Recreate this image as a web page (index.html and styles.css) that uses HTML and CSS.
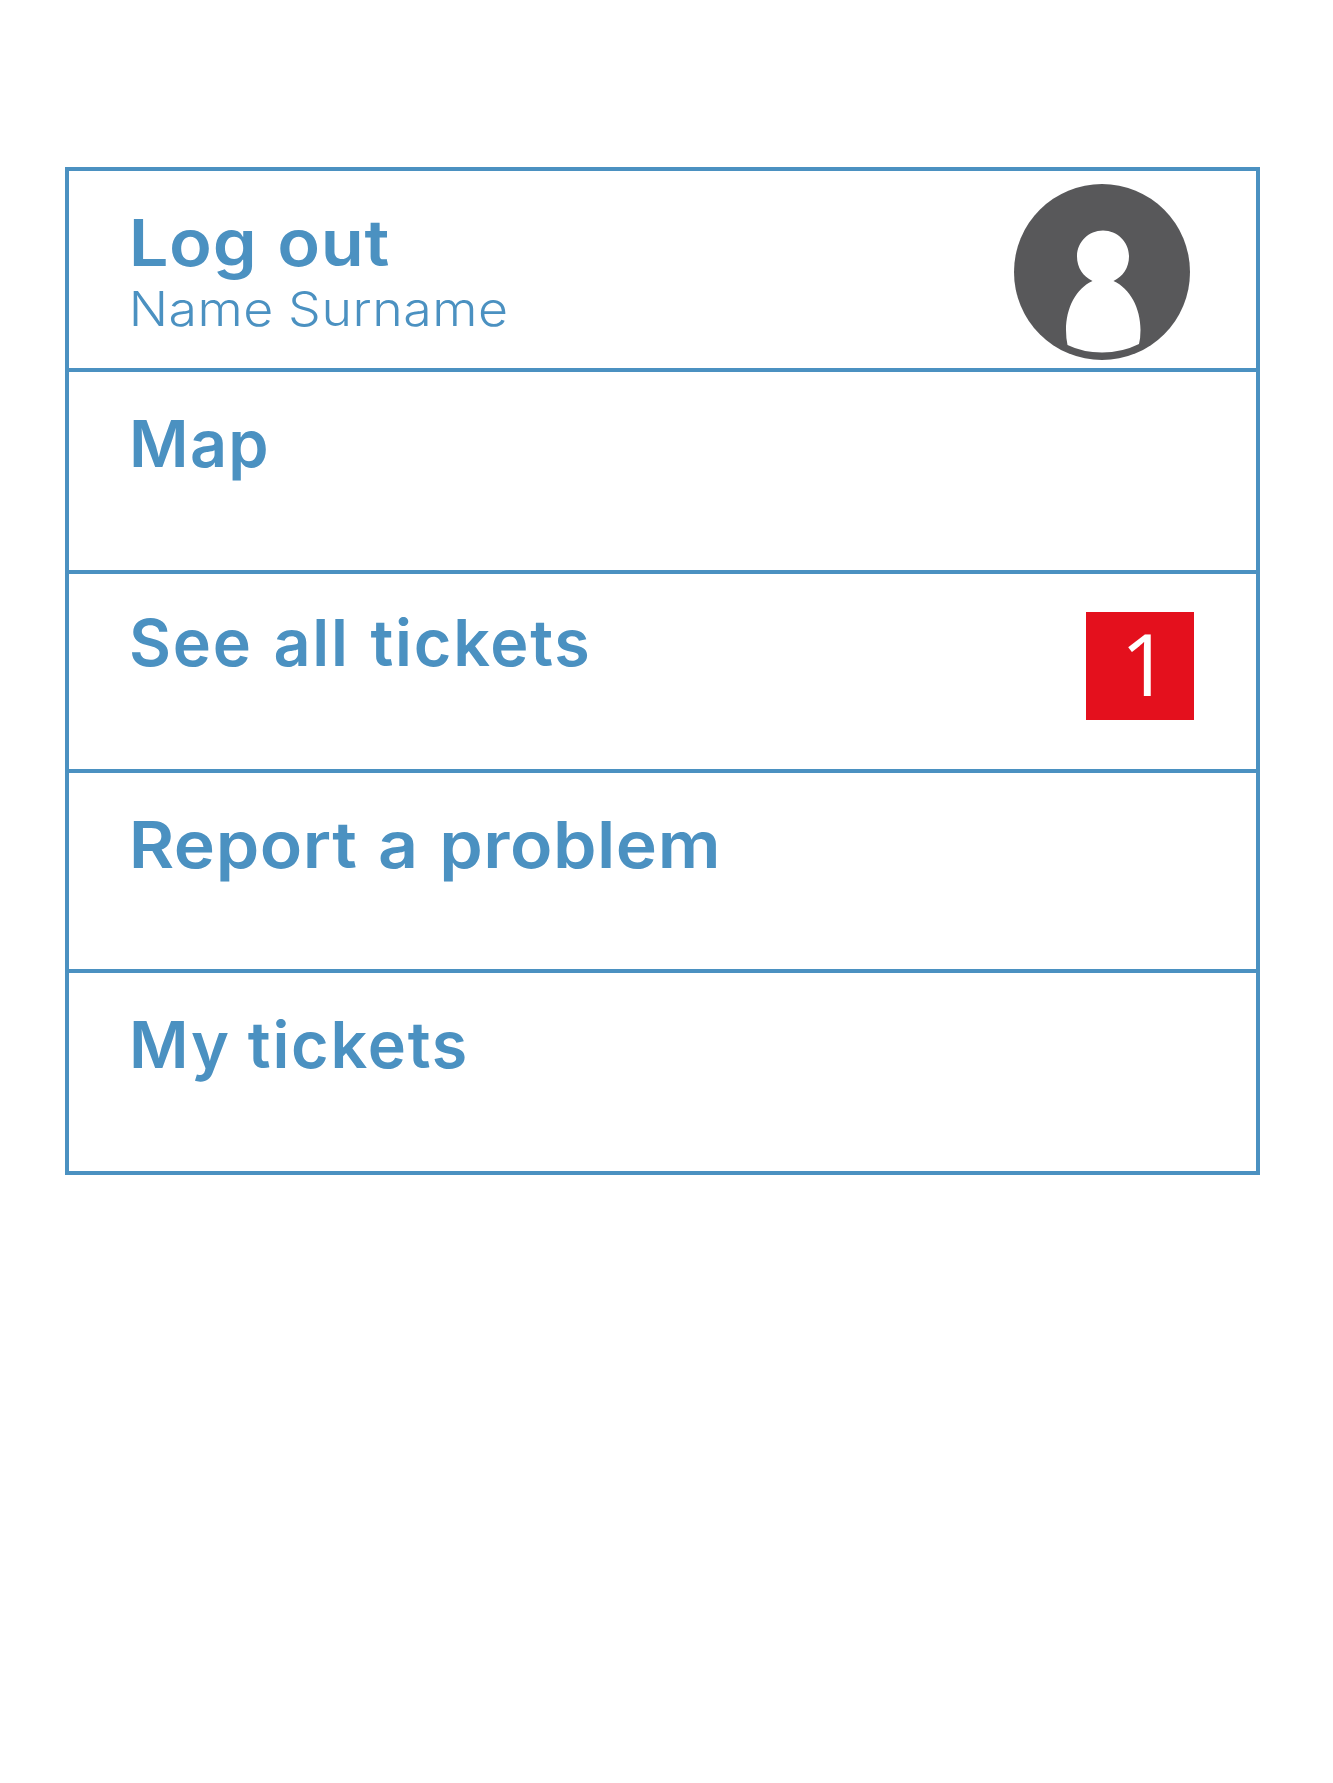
FILE: index.html
```html
<!DOCTYPE html>
<html lang="en">
<head>
<meta charset="utf-8">
<title>Menu</title>
<link rel="stylesheet" href="styles.css">
</head>
<body>
<nav class="menu">
  <a class="item">
    <span class="text"><span class="label logout">Log out</span><span class="user">Name Surname</span></span>
    <svg class="avatar" viewBox="0 0 176 176" aria-hidden="true">
      <circle cx="88" cy="88" r="88" fill="#58585a"/>
      <path fill="#fff" d="M89 46.500C103.500 46.500 115 58 115 72.500C115 83.500 109 92.500 99.500 97C116 104.500 126.500 124 126.500 146Q126.500 154 125 160Q108 168.500 88 168.500Q69 168.500 53.500 161Q52 154 52 146C52 124 62 104.500 78.500 97C69 92.500 63 83.500 63 72.500C63 58 74.500 46.500 89 46.500Z"/>
    </svg>
  </a>
  <a class="item"><span class="label map">Map</span></a>
  <a class="item raised"><span class="label all">See all tickets</span><span class="badge">1</span></a>
  <a class="item"><span class="label report">Report a problem</span></a>
  <a class="item"><span class="label mine">My tickets</span></a>
</nav>
</body>
</html>
```
FILE: styles.css
```css
body {
  margin: 0;
  background: #fff;
  font-family: Inter, "Liberation Sans", sans-serif;
  color: #4b91c1;
}

.menu {
  box-sizing: border-box;
  display: grid;
  grid-template-rows: 201px 202px 199px 200px 202px;
  width: 1195px;
  margin: 167px 0 0 65px;
  border: solid #4b91c1;
  border-width: 0 4px 4px;
}

.item {
  box-sizing: border-box;
  display: flex;
  justify-content: space-between;
  align-items: flex-start;
  padding: 40px 62px 0 60px;
  border-top: 4px solid #4b91c1;
}

.raised {
  padding-top: 37px;
}

.text {
  display: flex;
  flex-direction: column;
}

.label {
  font-size: 64.6px;
  line-height: 64px;
  font-weight: 600;
  white-space: nowrap;
  transform-origin: 4px 50%;
}

.logout {
  letter-spacing: 0.6px;
  word-spacing: 1.3px;
  transform: scaleX(1.09);
}

.map {
  letter-spacing: 1.3px;
}

.all {
  letter-spacing: 1.8px;
  word-spacing: 2.6px;
}

.report {
  letter-spacing: 0.5px;
  word-spacing: 2.3px;
  transform: scaleX(1.08);
}

.mine {
  letter-spacing: 1.8px;
  word-spacing: -1px;
}

.user {
  margin-top: 10px;
  font-size: 48px;
  line-height: 48px;
  font-weight: 340;
  letter-spacing: 0.5px;
  word-spacing: -0.9px;
  white-space: nowrap;
  transform: scaleX(1.08);
  transform-origin: 4px 50%;
}

.avatar {
  width: 176px;
  height: 176px;
  margin: -27px 4px 0 0;
}

.badge {
  box-sizing: border-box;
  width: 108px;
  height: 108px;
  margin-top: 1px;
  padding-left: 10px;
  background: #e4101d;
  color: #fff;
  font: 500 86px/102px "Open Sans", sans-serif;
  text-align: center;
}
```
